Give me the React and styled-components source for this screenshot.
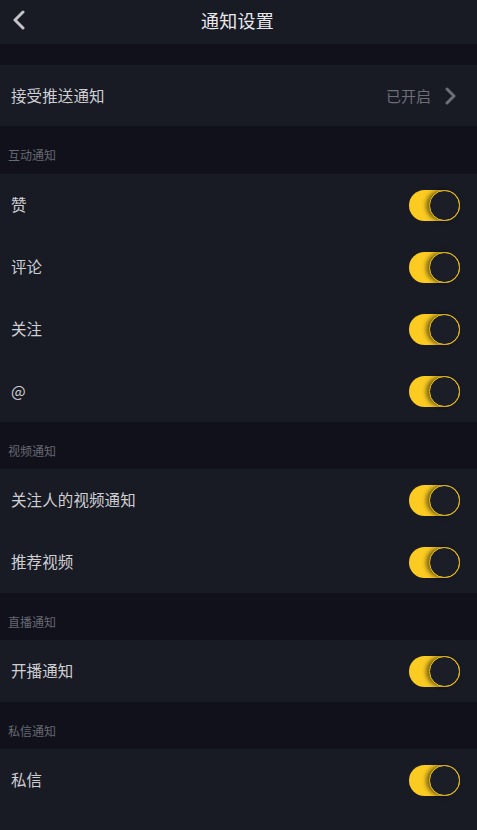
import React from "react";
import styled, { createGlobalStyle } from "styled-components";

const Global = createGlobalStyle`
  html, body { margin: 0; padding: 0; background: #181a24; }
  body { font-family: "Noto Sans CJK SC", "Noto Sans", sans-serif; }
  * { box-sizing: border-box; }
`;

const Page = styled.div`
  width: 477px;
  min-height: 830px;
  background: #181a24;
  display: flex;
  flex-direction: column;
`;

const Header = styled.header`
  height: 44px;
  background: #181a24;
  display: flex;
  align-items: center;
  justify-content: center;
  position: relative;
`;

const BackButton = styled.button`
  position: absolute;
  left: 8px;
  top: 8px;
  width: 22px;
  height: 24px;
  padding: 0;
  border: none;
  background: transparent;
  display: flex;
  align-items: center;
  justify-content: center;
`;

const Title = styled.h1`
  margin: 0 2px 5px 0;
  font-size: 18px;
  font-weight: 400;
  color: #e9e9ec;
  letter-spacing: 0.2px;
`;

const Spacer = styled.div`
  height: 21px;
  background: #10111a;
`;

const SectionTitle = styled.div`
  height: ${(p) => p.$h || 47}px;
  background: #10111a;
  color: #676973;
  font-size: 12px;
  padding-left: 8px;
  display: flex;
  align-items: flex-end;
  padding-bottom: ${(p) => p.$pb || 10}px;
`;

const Row = styled.div`
  height: ${(p) => p.$h || 62}px;
  background: #181a24;
  display: flex;
  align-items: center;
  justify-content: space-between;
  padding: 0 17px 0 11px;
`;

const Label = styled.span`
  font-size: 15.5px;
  color: #cfcfd3;
  letter-spacing: 0.1px;
  margin-top: -2px;
`;

const Value = styled.span`
  display: flex;
  align-items: center;
  gap: 13px;
  color: #6d6e77;
  font-size: 15px;
  margin-right: 4px;
`;

const Toggle = styled.div`
  width: 51px;
  height: 31px;
  border-radius: 16px;
  background: #fbcb22;
  position: relative;
  flex-shrink: 0;
`;

const Knob = styled.div`
  position: absolute;
  right: 0;
  top: 0;
  width: 31px;
  height: 31px;
  border-radius: 50%;
  background: #1b1d27;
  border: 1.5px solid #f0c21f;
  box-shadow: -3px 0 4px rgba(0, 0, 0, 0.5);
`;

const Switch = () => (
  <Toggle>
    <Knob />
  </Toggle>
);

const sections = [
  { title: "互动通知", h: 48, pb: 11, items: ["赞", "评论", "关注", "@"] },
  { title: "视频通知", h: 47, pb: 10, items: ["关注人的视频通知", "推荐视频"] },
  { title: "直播通知", h: 47, pb: 10, items: ["开播通知"] },
  { title: "私信通知", h: 47, pb: 10, items: ["私信"] },
];

export default function App() {
  return (
    <>
      <Global />
      <Page>
        <Header>
          <BackButton aria-label="back">
            <svg width="14" height="20" viewBox="0 0 14 20">
              <path d="M11 2 L3 10 L11 18" fill="none" stroke="#c4c4c8" strokeWidth="3" strokeLinecap="round" strokeLinejoin="round" />
            </svg>
          </BackButton>
          <Title>通知设置</Title>
        </Header>
        <Spacer />
        <Row $h={61}>
          <Label>接受推送通知</Label>
          <Value>
            已开启
            <svg width="12" height="18" viewBox="0 0 12 18">
              <path d="M3 2 L10 9 L3 16" fill="none" stroke="#6d6e77" strokeWidth="3" strokeLinecap="round" strokeLinejoin="round" />
            </svg>
          </Value>
        </Row>
        {sections.map((s) => (
          <React.Fragment key={s.title}>
            <SectionTitle $h={s.h} $pb={s.pb}>{s.title}</SectionTitle>
            {s.items.map((it) => (
              <Row key={it}>
                <Label>{it}</Label>
                <Switch />
              </Row>
            ))}
          </React.Fragment>
        ))}
      </Page>
    </>
  );
}
